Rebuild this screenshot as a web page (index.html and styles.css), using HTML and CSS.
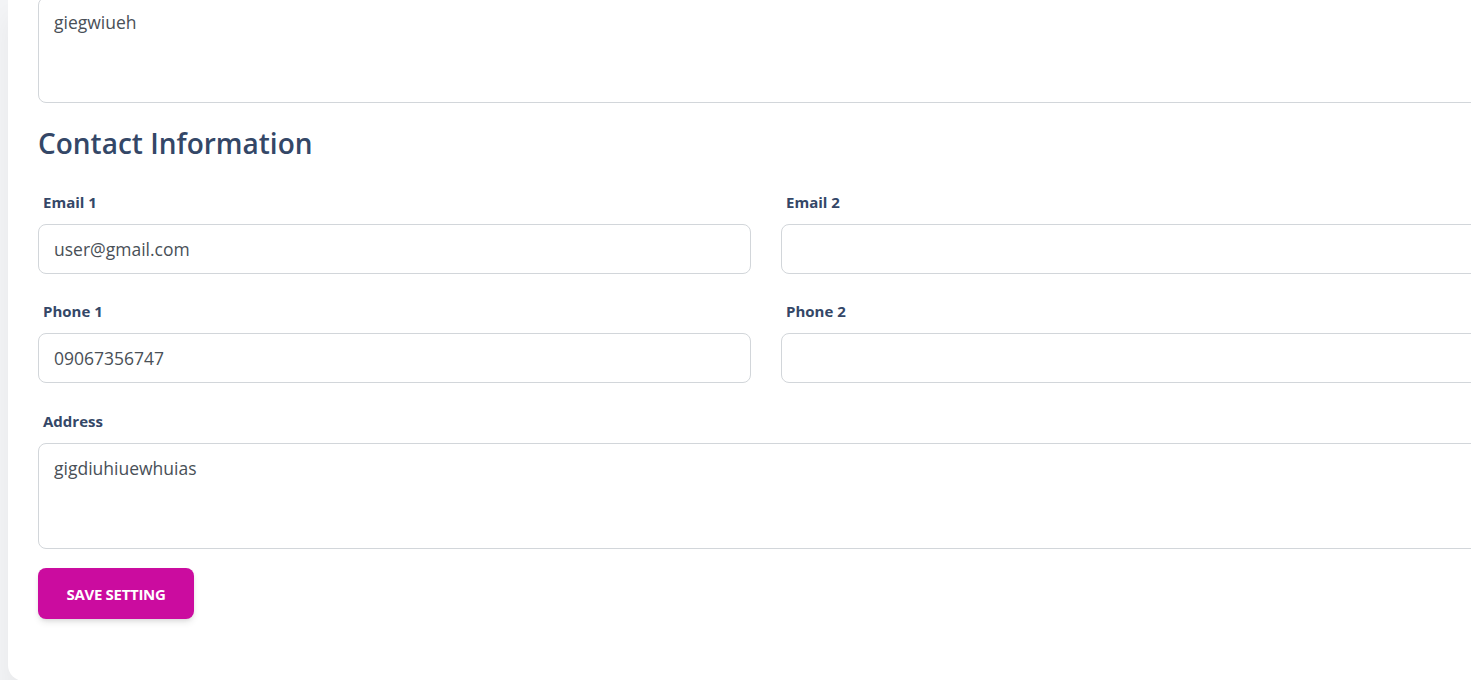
FILE: index.html
```html
<!DOCTYPE html>
<html lang="en">
<head>
<meta charset="utf-8">
<title>Settings</title>
<link rel="stylesheet" href="styles.css">
</head>
<body>
<main class="card">
  <form class="form">
    <textarea class="field area area-top">giegwiueh</textarea>
    <h2 class="section-title">Contact Information</h2>
    <div class="grid">
      <div class="group">
        <label class="label">Email 1</label>
        <input class="field" type="text" value="user@gmail.com">
      </div>
      <div class="group">
        <label class="label">Email 2</label>
        <input class="field" type="text" value="">
      </div>
      <div class="group">
        <label class="label">Phone 1</label>
        <input class="field" type="text" value="09067356747">
      </div>
      <div class="group">
        <label class="label">Phone 2</label>
        <input class="field" type="text" value="">
      </div>
      <div class="group full">
        <label class="label">Address</label>
        <textarea class="field area">gigdiuhiuewhuias</textarea>
      </div>
    </div>
    <button class="btn" type="button">Save Setting</button>
  </form>
</main>
</body>
</html>
```

FILE: styles.css
```css
html, body {
  margin: 0;
  padding: 0;
  height: 100%;
  overflow: hidden;
}
body {
  background: #f3f4f6;
  font-family: "Open Sans", "Liberation Sans", sans-serif;
  color: #344767;
}
.card {
  margin: -3px 0 0 8px;
  width: 1516px;
  background: #fff;
  border-radius: 0 0 16px 16px;
  box-shadow: 0 20px 27px 0 rgba(0, 0, 0, 0.05);
  padding: 0 30px 62px 30px;
  box-sizing: border-box;
}
.form {
  display: flex;
  flex-direction: column;
  align-items: flex-start;
}
.field {
  display: block;
  width: 100%;
  box-sizing: border-box;
  height: 50px;
  border: 1px solid #d2d6da;
  border-radius: 8px;
  padding: 0 15px;
  font-family: "Open Sans", "Liberation Sans", sans-serif;
  font-size: 17.5px;
  color: #495057;
  background: #fff;
  outline: none;
}
.area {
  height: 106px;
  padding: 11px 15px;
  line-height: 26px;
  resize: none;
}
.section-title {
  margin: 22px 0 0 0;
  font-size: 28px;
  line-height: 36px;
  font-weight: 600;
  color: #344767;
}
.grid {
  align-self: stretch;
  display: grid;
  grid-template-columns: 1fr 1fr;
  column-gap: 30px;
  row-gap: 26px;
  margin-top: 30px;
}
.group {
  display: flex;
  flex-direction: column;
}
.full {
  grid-column: 1 / -1;
  margin-top: 1px;
}
.label {
  display: block;
  font-size: 15px;
  line-height: 20px;
  font-weight: 700;
  color: #344767;
  padding: 1px 0 0 5px;
  margin-bottom: 12px;
}
.btn {
  margin-top: 19px;
  width: 156px;
  height: 51px;
  border: none;
  border-radius: 8px;
  background: #cb0c9f;
  color: #fff;
  font-family: "Open Sans", "Liberation Sans", sans-serif;
  font-size: 15px;
  font-weight: 700;
  text-transform: uppercase;
  letter-spacing: -0.3px;
  box-shadow: 0 4px 7px -1px rgba(0, 0, 0, 0.11), 0 2px 4px -1px rgba(0, 0, 0, 0.07);
  cursor: pointer;
}
```
